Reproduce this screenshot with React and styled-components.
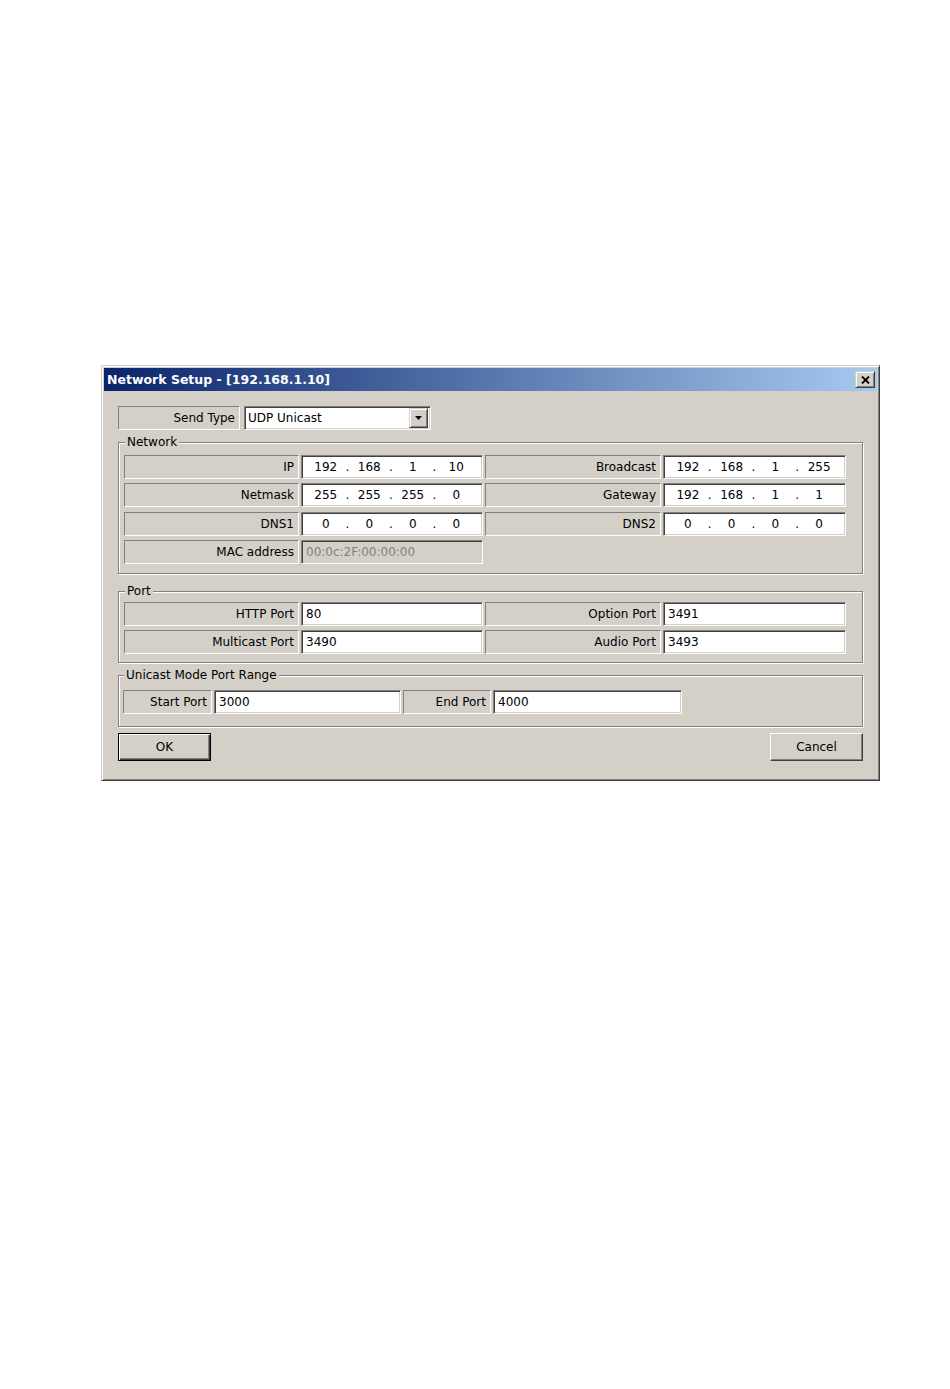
import React from 'react';
import styled, { createGlobalStyle } from 'styled-components';

const Global = createGlobalStyle`
  body {
    margin: 0;
    background: #fff;
    font-family: "DejaVu Sans", sans-serif;
    font-size: 12px;
    color: #000;
  }
`;

const Page = styled.div`
  min-height: 1389px;
  padding: 365px 0 0 101px;
  box-sizing: border-box;
`;

const Dialog = styled.div`
  width: 779px;
  box-sizing: border-box;
  background: #d4d0c8;
  border: 1px solid;
  border-color: #d4d0c8 #404040 #404040 #d4d0c8;
  box-shadow: inset 1px 1px #fff, inset -1px -1px #808080;
  padding: 2px;
`;

const TitleBar = styled.div`
  height: 23px;
  display: flex;
  align-items: center;
  justify-content: space-between;
  padding: 0 2px 0 3px;
  background: linear-gradient(to right, #0a246a, #a6caf0);
  color: #fff;
  font-weight: bold;
  font-size: 12.5px;
`;

const Bevel = styled.div`
  box-sizing: border-box;
  background: #d4d0c8;
  border: 1px solid;
  border-color: #d4d0c8 #404040 #404040 #d4d0c8;
  box-shadow: inset 1px 1px #fff, inset -1px -1px #808080;
  display: flex;
  align-items: center;
  justify-content: center;
`;

const CloseBtn = styled(Bevel)`
  width: 20px;
  height: 17px;
`;

const Client = styled.div`
  padding: 15px 14px 17px 14px;
  display: flex;
  flex-direction: column;
`;

const SendRow = styled.div`
  display: flex;
  gap: 4px;
  height: 24px;
`;

const Label = styled.div`
  box-sizing: border-box;
  height: 24px;
  width: ${(p) => p.$w || 'auto'};
  display: flex;
  align-items: center;
  justify-content: flex-end;
  padding-right: 4px;
  border: 1px solid;
  border-color: #808080 #fff #fff #808080;
  white-space: nowrap;
`;

const Field = styled.div`
  box-sizing: border-box;
  height: 24px;
  width: ${(p) => p.$w || 'auto'};
  display: flex;
  align-items: center;
  padding: 0 4px;
  background: ${(p) => (p.$disabled ? '#d4d0c8' : '#fff')};
  color: ${(p) => (p.$disabled ? '#808080' : '#000')};
  border: 1px solid;
  border-color: #808080 #fff #fff #808080;
  box-shadow: inset 1px 1px #404040, inset -1px -1px #d4d0c8;
  white-space: nowrap;
`;

const Select = styled(Field)`
  padding: 0 2px 0 3px;
  justify-content: space-between;
`;

const DropBtn = styled(Bevel)`
  width: 19px;
  height: 20px;
`;

const IpBox = styled(Field)`
  padding: 0 6px 0 4px;
`;

const Octet = styled.span`
  flex: 1;
  text-align: center;
`;

const Dot = styled.span`
  width: 4px;
  text-align: center;
`;

const Group = styled.fieldset`
  margin: ${(p) => p.$mt} 0 0 0;
  padding: ${(p) => p.$pad};
  border: 1px solid #808080;
  box-shadow: inset 1px 1px #fff, 1px 1px #fff;
  min-width: 0;
`;

const Legend = styled.legend`
  padding: 0 2px;
  margin-left: 1px;
  line-height: 15px;
  background: #d4d0c8;
`;

const Grid = styled.div`
  display: grid;
  grid-template-columns: ${(p) => p.$cols};
  grid-auto-rows: 24px;
  gap: 4.5px 2px;
`;

const ButtonRow = styled.div`
  display: flex;
  justify-content: space-between;
  margin-top: 6px;
`;

const Button = styled(Bevel)`
  width: 93px;
  height: 28px;
  outline: ${(p) => (p.$default ? '1px solid #000' : 'none')};
  outline-offset: -1px;
  border-color: #fff #404040 #404040 #fff;
  box-shadow: ${(p) =>
    p.$default
      ? 'inset 1px 1px #fff, inset -1px -1px #404040, inset -2px -2px #808080'
      : 'inset -1px -1px #808080'};
`;

function IpField({ value }) {
  const parts = value.split('.');
  return (
    <IpBox>
      {parts.map((o, i) => (
        <React.Fragment key={i}>
          {i > 0 && <Dot>.</Dot>}
          <Octet>{o}</Octet>
        </React.Fragment>
      ))}
    </IpBox>
  );
}

export default function App() {
  return (
    <Page>
      <Global />
      <Dialog>
        <TitleBar>
          <span>Network Setup - [192.168.1.10]</span>
          <CloseBtn>
            <svg width="9" height="8" viewBox="0 0 9 8">
              <path d="M1 0.5 L8 7.5 M8 0.5 L1 7.5" stroke="#000" strokeWidth="1.8" />
            </svg>
          </CloseBtn>
        </TitleBar>
        <Client>
          <SendRow>
            <Label $w="122px">Send Type</Label>
            <Select $w="187px">
              <span>UDP Unicast</span>
              <DropBtn>
                <svg width="7" height="4" viewBox="0 0 7 4">
                  <path d="M0 0 H7 L3.5 4 Z" fill="#000" />
                </svg>
              </DropBtn>
            </Select>
          </SendRow>

          <Group $mt="4.5px" $pad="5px 0 9px 5px">
            <Legend>Network</Legend>
            <Grid $cols="175px 182px 176px 183px">
              <Label>IP</Label>
              <IpField value="192.168.1.10" />
              <Label>Broadcast</Label>
              <IpField value="192.168.1.255" />
              <Label>Netmask</Label>
              <IpField value="255.255.255.0" />
              <Label>Gateway</Label>
              <IpField value="192.168.1.1" />
              <Label>DNS1</Label>
              <IpField value="0.0.0.0" />
              <Label>DNS2</Label>
              <IpField value="0.0.0.0" />
              <Label>MAC address</Label>
              <Field $disabled>00:0c:2F:00:00:00</Field>
            </Grid>
          </Group>

          <Group $mt="10px" $pad="2.5px 0 7.5px 5px">
            <Legend>Port</Legend>
            <Grid $cols="175px 182px 176px 183px">
              <Label>HTTP Port</Label>
              <Field>80</Field>
              <Label>Option Port</Label>
              <Field>3491</Field>
              <Label>Multicast Port</Label>
              <Field>3490</Field>
              <Label>Audio Port</Label>
              <Field>3493</Field>
            </Grid>
          </Group>

          <Group $mt="5.5px" $pad="6.5px 0 12px 4px">
            <Legend>Unicast Mode Port Range</Legend>
            <Grid $cols="89px 187px 88px 189px">
              <Label>Start Port</Label>
              <Field>3000</Field>
              <Label>End Port</Label>
              <Field>4000</Field>
            </Grid>
          </Group>

          <ButtonRow>
            <Button $default>OK</Button>
            <Button>Cancel</Button>
          </ButtonRow>
        </Client>
      </Dialog>
    </Page>
  );
}
